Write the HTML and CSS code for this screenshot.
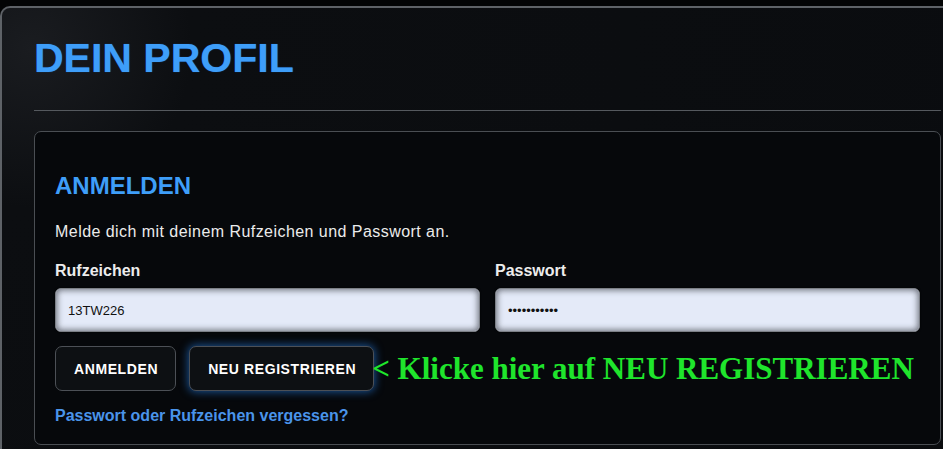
FILE: index.html
```html
<!DOCTYPE html>
<html lang="de">
<head>
<meta charset="utf-8">
<title>Dein Profil</title>
<link rel="stylesheet" href="styles.css">
</head>
<body>
<main class="panel">
  <h1 class="title">DEIN PROFIL</h1>
  <hr class="divider">
  <section class="card">
    <h2 class="card-title">ANMELDEN</h2>
    <p class="intro">Melde dich mit deinem Rufzeichen und Passwort an.</p>
    <div class="fields">
      <label class="field">
        <span class="label">Rufzeichen</span>
        <input class="input" type="text" value="13TW226">
      </label>
      <label class="field">
        <span class="label">Passwort</span>
        <input class="input" type="text" value="•••••••••••">
      </label>
    </div>
    <div class="actions">
      <button class="btn" type="button">ANMELDEN</button>
      <button class="btn btn-glow" type="button">NEU REGISTRIEREN</button>
      <span class="hint">&lt; Klicke hier auf NEU REGISTRIEREN</span>
    </div>
    <a class="forgot" href="#">Passwort oder Rufzeichen vergessen?</a>
  </section>
</main>
</body>
</html>
```
FILE: styles.css
```css
html, body {
  margin: 0;
  padding: 0;
  height: 100%;
  overflow: hidden;
  background: #030405;
}
body {
  font-family: "Liberation Sans", Arial, sans-serif;
  color: #e8e8e8;
}
.panel {
  margin-top: 6px;
  width: 974px;
  height: 460px;
  box-sizing: border-box;
  padding: 25px 33px 0 32px;
  border: 2px solid #5e6267;
  border-right: none;
  border-bottom: none;
  border-top-left-radius: 10px;
  background: radial-gradient(circle at 30px 40px, #1a1c20 0, #0c0e11 160px, #0a0c0f 100%);
}
.title {
  margin: 0;
  font-size: 41px;
  line-height: 50px;
  font-weight: 700;
  color: #3e9ef9;
  text-shadow: 0 0 1px #1c5fb0;
}
.divider {
  margin: 27px 0 20px 0;
  width: 907px;
  border: none;
  border-top: 1px solid #55595e;
  height: 0;
}
.card {
  width: 907px;
  box-sizing: border-box;
  padding: 40px 20px 19px 20px;
  border: 1px solid #4a4e53;
  border-radius: 7px;
  background: #06080b;
}
.card-title {
  margin: 0;
  font-size: 24px;
  line-height: 28px;
  font-weight: 700;
  color: #3e9ef9;
}
.intro {
  margin: 23px 0 0 0;
  font-size: 16px;
  line-height: 18px;
  letter-spacing: 0.45px;
  color: #ececec;
}
.fields {
  margin-top: 21px;
  display: grid;
  grid-template-columns: 1fr 1fr;
  column-gap: 15px;
}
.field {
  display: flex;
  flex-direction: column;
  gap: 8px;
}
.label {
  font-size: 16px;
  line-height: 18px;
  font-weight: 700;
  color: #ececec;
}
.input {
  height: 44px;
  box-sizing: border-box;
  padding: 0 12px;
  border: 1px solid #7b7f86;
  border-radius: 6px;
  background: #e4eaf8;
  box-shadow: inset 0 0 6px 1px rgba(60, 64, 72, 0.75), 0 0 2px rgba(0, 0, 0, 0.8);
  font-family: "Liberation Sans", Arial, sans-serif;
  font-size: 13px;
  color: #111;
  outline: none;
}
.actions {
  margin-top: 14px;
  display: flex;
  align-items: center;
  gap: 13px;
}
.btn {
  height: 45px;
  box-sizing: border-box;
  padding: 0 17px 0 18px;
  border: 1px solid #4c5056;
  border-radius: 7px;
  background: #0d1013;
  color: #ffffff;
  font-family: "Liberation Sans", Arial, sans-serif;
  font-size: 14px;
  font-weight: 700;
  letter-spacing: 0.6px;
}
.btn-glow {
  box-shadow: 0 0 8px 1px rgba(40, 140, 255, 0.55);
}
.hint {
  margin-left: -15px;
  font-family: "Liberation Serif", "Times New Roman", serif;
  font-size: 31px;
  font-weight: 700;
  color: #1fe52c;
  white-space: nowrap;
}
.forgot {
  display: block;
  margin-top: 16px;
  font-size: 16px;
  line-height: 18px;
  font-weight: 700;
  color: #4a94ea;
  text-decoration: none;
}
```
